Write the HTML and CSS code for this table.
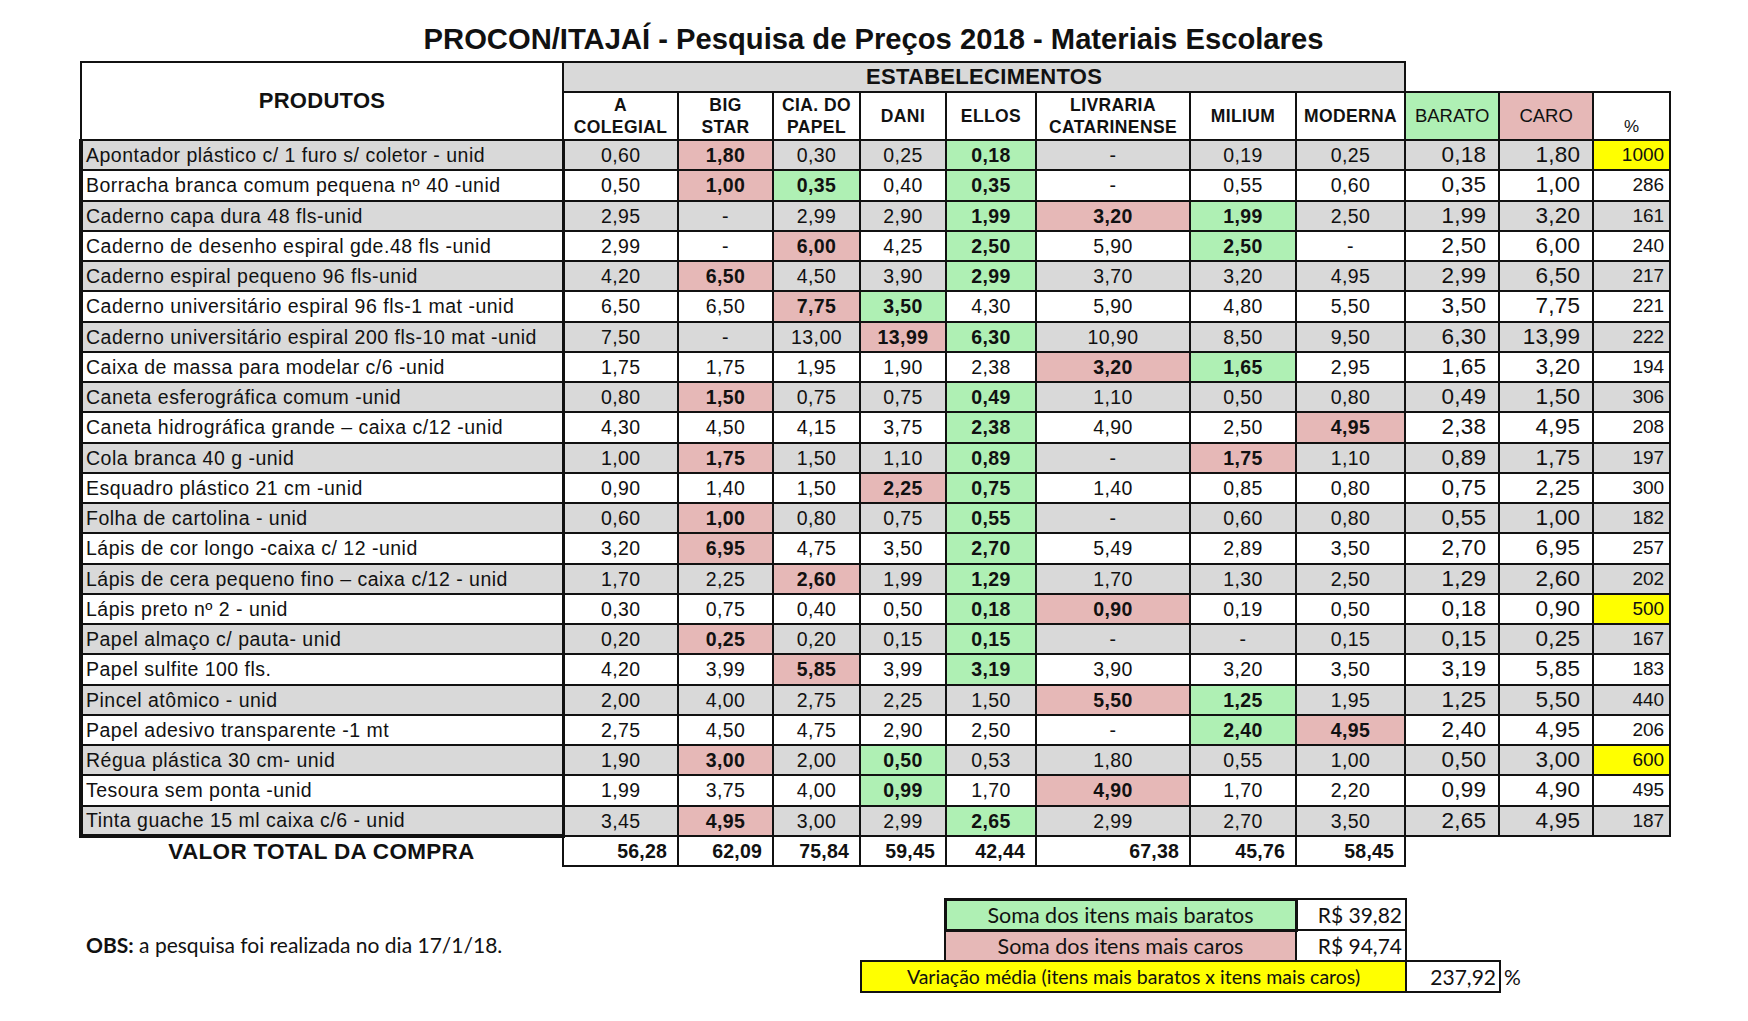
FILE: index.html
```html
<!DOCTYPE html>
<html lang="pt-BR">
<head>
<meta charset="utf-8">
<title>PROCON/ITAJAÍ - Pesquisa de Preços 2018 - Materiais Escolares</title>
<link rel="stylesheet" href="styles.css">
</head>
<body>
<div class="page">
  <h1 class="title">PROCON/ITAJAÍ - Pesquisa de Preços 2018 - Materiais Escolares</h1>
  <table class="grid">
    <colgroup>
      <col class="w-prod"><col class="w-col"><col class="w-big"><col class="w-cia"><col class="w-dani"><col class="w-ellos"><col class="w-liv"><col class="w-mil"><col class="w-mod"><col class="w-bar"><col class="w-car"><col class="w-pct">
    </colgroup>
    <thead>
      <tr class="h1">
        <th class="prod" rowspan="2">PRODUTOS</th>
        <th class="est" colspan="8">ESTABELECIMENTOS</th>
        <th class="blank" colspan="3"></th>
      </tr>
      <tr class="h2">
        <th>A<br>COLEGIAL</th>
        <th>BIG<br>STAR</th>
        <th>CIA. DO<br>PAPEL</th>
        <th>DANI</th>
        <th>ELLOS</th>
        <th>LIVRARIA<br>CATARINENSE</th>
        <th>MILIUM</th>
        <th>MODERNA</th>
        <th class="hb">BARATO</th>
        <th class="hc">CARO</th>
        <th class="hp">%</th>
      </tr>
    </thead>
    <tbody>
      <tr class="alt"><td class="p">Apontador plástico c/ 1 furo s/ coletor - unid</td><td>0,60</td><td class="r">1,80</td><td>0,30</td><td>0,25</td><td class="g">0,18</td><td>-</td><td>0,19</td><td>0,25</td><td class="b">0,18</td><td class="b">1,80</td><td class="pc y">1000</td></tr>
      <tr><td class="p">Borracha branca comum pequena nº 40 -unid</td><td>0,50</td><td class="r">1,00</td><td class="g">0,35</td><td>0,40</td><td class="g">0,35</td><td>-</td><td>0,55</td><td>0,60</td><td class="b">0,35</td><td class="b">1,00</td><td class="pc">286</td></tr>
      <tr class="alt"><td class="p">Caderno capa dura 48 fls-unid</td><td>2,95</td><td>-</td><td>2,99</td><td>2,90</td><td class="g">1,99</td><td class="r">3,20</td><td class="g">1,99</td><td>2,50</td><td class="b">1,99</td><td class="b">3,20</td><td class="pc">161</td></tr>
      <tr><td class="p">Caderno de desenho espiral gde.48 fls -unid</td><td>2,99</td><td>-</td><td class="r">6,00</td><td>4,25</td><td class="g">2,50</td><td>5,90</td><td class="g">2,50</td><td>-</td><td class="b">2,50</td><td class="b">6,00</td><td class="pc">240</td></tr>
      <tr class="alt"><td class="p">Caderno espiral pequeno 96 fls-unid</td><td>4,20</td><td class="r">6,50</td><td>4,50</td><td>3,90</td><td class="g">2,99</td><td>3,70</td><td>3,20</td><td>4,95</td><td class="b">2,99</td><td class="b">6,50</td><td class="pc">217</td></tr>
      <tr><td class="p">Caderno universitário espiral 96 fls-1 mat -unid</td><td>6,50</td><td>6,50</td><td class="r">7,75</td><td class="g">3,50</td><td>4,30</td><td>5,90</td><td>4,80</td><td>5,50</td><td class="b">3,50</td><td class="b">7,75</td><td class="pc">221</td></tr>
      <tr class="alt"><td class="p">Caderno universitário espiral 200 fls-10 mat -unid</td><td>7,50</td><td>-</td><td>13,00</td><td class="r">13,99</td><td class="g">6,30</td><td>10,90</td><td>8,50</td><td>9,50</td><td class="b">6,30</td><td class="b">13,99</td><td class="pc">222</td></tr>
      <tr><td class="p">Caixa de massa para modelar c/6 -unid</td><td>1,75</td><td>1,75</td><td>1,95</td><td>1,90</td><td>2,38</td><td class="r">3,20</td><td class="g">1,65</td><td>2,95</td><td class="b">1,65</td><td class="b">3,20</td><td class="pc">194</td></tr>
      <tr class="alt"><td class="p">Caneta esferográfica comum -unid</td><td>0,80</td><td class="r">1,50</td><td>0,75</td><td>0,75</td><td class="g">0,49</td><td>1,10</td><td>0,50</td><td>0,80</td><td class="b">0,49</td><td class="b">1,50</td><td class="pc">306</td></tr>
      <tr><td class="p">Caneta hidrográfica grande – caixa c/12 -unid</td><td>4,30</td><td>4,50</td><td>4,15</td><td>3,75</td><td class="g">2,38</td><td>4,90</td><td>2,50</td><td class="r">4,95</td><td class="b">2,38</td><td class="b">4,95</td><td class="pc">208</td></tr>
      <tr class="alt"><td class="p">Cola branca 40 g -unid</td><td>1,00</td><td class="r">1,75</td><td>1,50</td><td>1,10</td><td class="g">0,89</td><td>-</td><td class="r">1,75</td><td>1,10</td><td class="b">0,89</td><td class="b">1,75</td><td class="pc">197</td></tr>
      <tr><td class="p">Esquadro plástico 21 cm -unid</td><td>0,90</td><td>1,40</td><td>1,50</td><td class="r">2,25</td><td class="g">0,75</td><td>1,40</td><td>0,85</td><td>0,80</td><td class="b">0,75</td><td class="b">2,25</td><td class="pc">300</td></tr>
      <tr class="alt"><td class="p">Folha de cartolina - unid</td><td>0,60</td><td class="r">1,00</td><td>0,80</td><td>0,75</td><td class="g">0,55</td><td>-</td><td>0,60</td><td>0,80</td><td class="b">0,55</td><td class="b">1,00</td><td class="pc">182</td></tr>
      <tr><td class="p">Lápis de cor longo -caixa c/ 12 -unid</td><td>3,20</td><td class="r">6,95</td><td>4,75</td><td>3,50</td><td class="g">2,70</td><td>5,49</td><td>2,89</td><td>3,50</td><td class="b">2,70</td><td class="b">6,95</td><td class="pc">257</td></tr>
      <tr class="alt"><td class="p">Lápis de cera pequeno fino – caixa c/12 - unid</td><td>1,70</td><td>2,25</td><td class="r">2,60</td><td>1,99</td><td class="g">1,29</td><td>1,70</td><td>1,30</td><td>2,50</td><td class="b">1,29</td><td class="b">2,60</td><td class="pc">202</td></tr>
      <tr><td class="p">Lápis preto nº 2 - unid</td><td>0,30</td><td>0,75</td><td>0,40</td><td>0,50</td><td class="g">0,18</td><td class="r">0,90</td><td>0,19</td><td>0,50</td><td class="b">0,18</td><td class="b">0,90</td><td class="pc y">500</td></tr>
      <tr class="alt"><td class="p">Papel almaço c/ pauta- unid</td><td>0,20</td><td class="r">0,25</td><td>0,20</td><td>0,15</td><td class="g">0,15</td><td>-</td><td>-</td><td>0,15</td><td class="b">0,15</td><td class="b">0,25</td><td class="pc">167</td></tr>
      <tr><td class="p">Papel sulfite 100 fls.</td><td>4,20</td><td>3,99</td><td class="r">5,85</td><td>3,99</td><td class="g">3,19</td><td>3,90</td><td>3,20</td><td>3,50</td><td class="b">3,19</td><td class="b">5,85</td><td class="pc">183</td></tr>
      <tr class="alt"><td class="p">Pincel atômico - unid</td><td>2,00</td><td>4,00</td><td>2,75</td><td>2,25</td><td>1,50</td><td class="r">5,50</td><td class="g">1,25</td><td>1,95</td><td class="b">1,25</td><td class="b">5,50</td><td class="pc">440</td></tr>
      <tr><td class="p">Papel adesivo transparente -1 mt</td><td>2,75</td><td>4,50</td><td>4,75</td><td>2,90</td><td>2,50</td><td>-</td><td class="g">2,40</td><td class="r">4,95</td><td class="b">2,40</td><td class="b">4,95</td><td class="pc">206</td></tr>
      <tr class="alt"><td class="p">Régua plástica 30 cm- unid</td><td>1,90</td><td class="r">3,00</td><td>2,00</td><td class="g">0,50</td><td>0,53</td><td>1,80</td><td>0,55</td><td>1,00</td><td class="b">0,50</td><td class="b">3,00</td><td class="pc y">600</td></tr>
      <tr><td class="p">Tesoura sem ponta -unid</td><td>1,99</td><td>3,75</td><td>4,00</td><td class="g">0,99</td><td>1,70</td><td class="r">4,90</td><td>1,70</td><td>2,20</td><td class="b">0,99</td><td class="b">4,90</td><td class="pc">495</td></tr>
      <tr class="alt last"><td class="p">Tinta guache 15 ml caixa c/6 - unid</td><td>3,45</td><td class="r">4,95</td><td>3,00</td><td>2,99</td><td class="g">2,65</td><td>2,99</td><td>2,70</td><td>3,50</td><td class="b">2,65</td><td class="b">4,95</td><td class="pc">187</td></tr>
      <tr class="total"><td class="tl">VALOR TOTAL DA COMPRA</td><td class="tv">56,28</td><td class="tv">62,09</td><td class="tv">75,84</td><td class="tv">59,45</td><td class="tv">42,44</td><td class="tv">67,38</td><td class="tv">45,76</td><td class="tv">58,45</td><td class="blank" colspan="3"></td></tr>
    </tbody>
  </table>

  <div class="foot">
    <p class="obs"><strong>OBS:</strong> a pesquisa foi realizada no dia 17/1/18.</p>
    <table class="sum">
      <colgroup><col class="s1"><col class="s2"><col class="s3"><col class="s4"><col class="s5"></colgroup>
      <tr><td class="e"></td><td class="sg">Soma dos itens mais baratos</td><td class="sv">R$ 39,82</td><td class="e"></td><td class="e"></td></tr>
      <tr><td class="e"></td><td class="sr">Soma dos itens mais caros</td><td class="sv">R$ 94,74</td><td class="e"></td><td class="e"></td></tr>
      <tr><td class="sy" colspan="3">Variação média (itens mais baratos x itens mais caros)</td><td class="sv">237,92</td><td class="e sp">%</td></tr>
    </table>
  </div>
</div>
</body>
</html>
```

FILE: styles.css
```css
* { box-sizing: border-box; }

body {
  margin: 0;
  background: #ffffff;
  color: #111111;
  font-family: "Liberation Sans", Arial, sans-serif;
}

.page {
  padding: 21px 0 0 79px;
  width: 1748px;
}

.title {
  margin: 0;
  width: 1589px;
  height: 40px;
  line-height: 36px;
  text-align: center;
  font-size: 29.2px;
  font-weight: bold;
}

/* ---------- main table ---------- */
.grid {
  border-collapse: collapse;
  table-layout: fixed;
  width: 1589px;
}

.w-prod { width: 482px; }
.w-col  { width: 115px; }
.w-big  { width: 95px; }
.w-cia  { width: 87px; }
.w-dani { width: 86px; }
.w-ellos{ width: 90px; }
.w-liv  { width: 154px; }
.w-mil  { width: 106px; }
.w-mod  { width: 109px; }
.w-bar  { width: 94px; }
.w-car  { width: 94px; }
.w-pct  { width: 77px; }

.grid th,
.grid td {
  border: 2px solid #111111;
  padding: 0;
  white-space: nowrap;
  overflow: hidden;
}

.grid th {
  font-weight: bold;
  font-size: 17.5px;
  letter-spacing: 0.4px;
  line-height: 22px;
  text-align: center;
  vertical-align: middle;
  background: #ffffff;
}

.grid tr.h1 { height: 30px; }
.grid tr.h2 { height: 48px; }

.grid th.prod {
  font-size: 22px;
  letter-spacing: 0.3px;
}

.grid th.est {
  background: #d9d9d9;
  font-size: 22px;
  letter-spacing: 0.3px;
  line-height: 26px;
}

.grid th.blank,
.grid td.blank {
  border: none;
  background: transparent;
}

.grid th.hb,
.grid th.hc {
  font-weight: normal;
  font-size: 18.5px;
  letter-spacing: 0;
}
.grid th.hb { background: #aff0b4; }
.grid th.hc { background: #e6b8b7; }

.grid th.hp {
  font-weight: normal;
  font-size: 17px;
  letter-spacing: 0;
  vertical-align: bottom;
  padding-bottom: 1px;
}

.grid tbody tr { height: 30.25px; }
.grid tbody tr.total { height: 30px; }

.grid td {
  font-size: 19.5px;
  letter-spacing: 0.4px;
  line-height: 24px;
  text-align: center;
}

.grid tr.alt td { background: #d9d9d9; }

.grid td.p {
  text-align: left;
  padding-left: 3px;
  letter-spacing: 0.5px;
  border-left: 4px solid #111111;
  border-right: 3px solid #111111;
}
.grid tr.last td.p { border-bottom: 4px solid #111111; }

.grid tr td.g { background: #aff0b4; font-weight: bold; }
.grid tr td.r { background: #e6b8b7; font-weight: bold; }
.grid tr td.y { background: #ffff00; }

.grid td.b {
  text-align: right;
  padding-right: 12px;
  font-size: 22.5px;
  letter-spacing: 0.2px;
}

.grid td.pc {
  text-align: right;
  padding-right: 5px;
  font-size: 19px;
  letter-spacing: 0;
}

.grid td.tl {
  border: none;
  font-weight: bold;
  font-size: 22.5px;
  letter-spacing: 0.3px;
  text-align: center;
}

.grid td.tv {
  font-weight: bold;
  text-align: right;
  padding-right: 10px;
  font-size: 19.5px;
  letter-spacing: 0.2px;
}

/* ---------- footer ---------- */
.foot {
  display: flex;
  align-items: flex-start;
  margin-top: 31px;
}

.obs {
  margin: 0;
  width: 781px;
  padding: 35px 0 0 7px;
  font-family: Lato, "Open Sans", sans-serif;
  font-size: 21px;
  line-height: 24px;
}

.sum {
  border-collapse: collapse;
  table-layout: fixed;
  width: 669px;
  font-family: Lato, "Open Sans", sans-serif;
  font-size: 20px;
}

.s1 { width: 84px; }
.s2 { width: 351px; }
.s3 { width: 110px; }
.s4 { width: 94px; }
.s5 { width: 30px; }

.sum tr { height: 31px; }

.sum td {
  padding: 0;
  white-space: nowrap;
  border: 2px solid #111111;
  line-height: 24px;
}

.sum td.e { border: none; }

.sum td.sg {
  background: #aff0b4;
  border: 3px solid #111111;
  text-align: center;
  font-size: 21.5px;
}

.sum td.sr {
  background: #e6b8b7;
  text-align: center;
  font-size: 21.5px;
}

.sum td.sy {
  background: #ffff00;
  text-align: center;
  font-size: 19.5px;
}

.sum td.sv {
  text-align: right;
  padding-right: 3px;
  font-size: 21px;
}

.sum td.sp {
  padding-left: 3px;
  font-size: 21px;
}
```
